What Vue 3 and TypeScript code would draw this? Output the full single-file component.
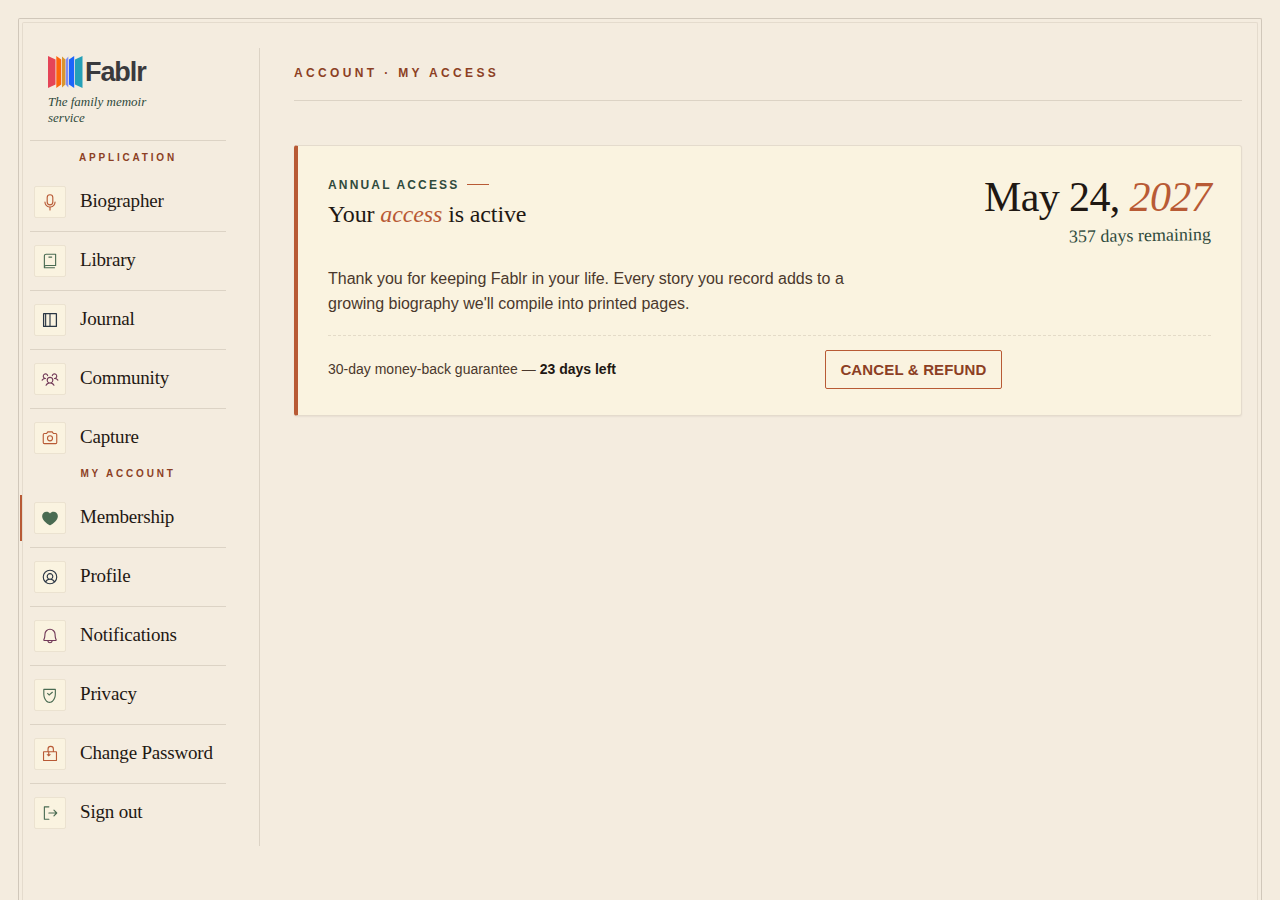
<script setup lang="ts">
interface NavItem {
  label: string
  tone: string
  icon: string
  active?: boolean
}
interface NavGroup {
  title: string
  items: NavItem[]
}

const groups: NavGroup[] = [
  {
    title: 'Application',
    items: [
      { label: 'Biographer', tone: 'rust', icon: 'M128,176a48.05,48.05,0,0,0,48-48V64a48,48,0,0,0-96,0v64A48.05,48.05,0,0,0,128,176ZM96,64a32,32,0,0,1,64,0v64a32,32,0,0,1-64,0Zm40,143.6V240a8,8,0,0,1-16,0V207.6A80.11,80.11,0,0,1,48,128a8,8,0,0,1,16,0,64,64,0,0,0,128,0,8,8,0,0,1,16,0A80.11,80.11,0,0,1,136,207.6Z' },
      { label: 'Library', tone: 'green', icon: 'M208,24H72A32,32,0,0,0,40,56V224a8,8,0,0,0,8,8H192a8,8,0,0,0,0-16H56a16,16,0,0,1,16-16H208a8,8,0,0,0,8-8V32A8,8,0,0,0,208,24Zm-8,160H72a31.82,31.82,0,0,0-16,4.29V56A16,16,0,0,1,72,40H200ZM112,64h40a8,8,0,0,1,0,16h-40a8,8,0,0,1,0-16Z' },
      { label: 'Journal', tone: 'navy', icon: 'M216,28H40A12,12,0,0,0,28,40V216a12,12,0,0,0,12,12H216a12,12,0,0,0,12-12V40A12,12,0,0,0,216,28ZM46,46H58V210H46ZM120,210H74V46h46ZM210,210H136V46h74Z' },
      { label: 'Community', tone: 'plum', icon: 'M244.8,150.4a8,8,0,0,1-11.2-1.6A51.6,51.6,0,0,0,192,128a8,8,0,0,1-7.37-4.89,8,8,0,0,1,0-6.22A8,8,0,0,1,192,112a24,24,0,1,0-23.24-30,8,8,0,1,1-15.5-4A40,40,0,1,1,219,117.51a67.94,67.94,0,0,1,27.43,21.68A8,8,0,0,1,244.8,150.4ZM190.92,212a8,8,0,1,1-13.84,8,57,57,0,0,0-98.16,0,8,8,0,1,1-13.84-8,72.06,72.06,0,0,1,33.74-29.92,48,48,0,1,1,58.36,0A72.06,72.06,0,0,1,190.92,212ZM128,176a32,32,0,1,0-32-32A32,32,0,0,0,128,176ZM72,120a8,8,0,0,0-8-8A24,24,0,1,1,87.24,82a8,8,0,1,0,15.5-4A40,40,0,1,0,37,117.51,67.94,67.94,0,0,0,9.6,139.19a8,8,0,1,0,12.8,9.61A51.6,51.6,0,0,1,64,128,8,8,0,0,0,72,120Z' },
      { label: 'Capture', tone: 'rust', icon: 'M208,56H180.28L166.65,35.56A8,8,0,0,0,160,32H96a8,8,0,0,0-6.65,3.56L75.71,56H48A24,24,0,0,0,24,80V192a24,24,0,0,0,24,24H208a24,24,0,0,0,24-24V80A24,24,0,0,0,208,56Zm8,136a8,8,0,0,1-8,8H48a8,8,0,0,1-8-8V80a8,8,0,0,1,8-8H80a8,8,0,0,0,6.66-3.56L100.28,48h55.43l13.63,20.44A8,8,0,0,0,176,72h32a8,8,0,0,1,8,8ZM128,88a44,44,0,1,0,44,44A44.05,44.05,0,0,0,128,88Zm0,72a28,28,0,1,1,28-28A28,28,0,0,1,128,160Z' },
    ],
  },
  {
    title: 'My account',
    items: [
      { label: 'Membership', tone: 'green', active: true, icon: 'M240,102c0,70-103.79,126.66-108.21,129a8,8,0,0,1-7.58,0C119.79,228.66,16,172,16,102A62.07,62.07,0,0,1,78,40c20.65,0,38.73,8.88,50,23.89C139.27,48.88,157.35,40,178,40A62.07,62.07,0,0,1,240,102Z' },
      { label: 'Profile', tone: 'navy', icon: 'M128,24A104,104,0,1,0,232,128,104.11,104.11,0,0,0,128,24ZM74.08,197.5a64,64,0,0,1,107.84,0,87.83,87.83,0,0,1-107.84,0ZM96,120a32,32,0,1,1,32,32A32,32,0,0,1,96,120Zm97.76,66.41a79.66,79.66,0,0,0-36.06-28.75,48,48,0,1,0-59.4,0,79.66,79.66,0,0,0-36.06,28.75,88,88,0,1,1,131.52,0Z' },
      { label: 'Notifications', tone: 'plum', icon: 'M221.8,175.94C216.25,166.38,208,139.33,208,104a80,80,0,1,0-160,0c0,35.34-8.26,62.38-13.81,71.94A16,16,0,0,0,48,200H88.81a40,40,0,0,0,78.38,0H208a16,16,0,0,0,13.8-24.06ZM128,216a24,24,0,0,1-22.62-16h45.24A24,24,0,0,1,128,216ZM48,184c7.7-13.24,16-43.92,16-80a64,64,0,1,1,128,0c0,36.05,8.28,66.73,16,80Z' },
      { label: 'Privacy', tone: 'green', icon: 'M204,40H40a8,8,0,0,0-8,8v64c0,80,50,128,90,128s90-48,90-128V48A8,8,0,0,0,204,40ZM196,112c0,68-42,112-74,112S48,180,48,112V56H196ZM84,108l12-12,20,20,44-38,11,13-55,47Z' },
      { label: 'Change Password', tone: 'rust', icon: 'M216,88H184V58a46,46,0,0,0-92,0V88H40a12,12,0,0,0-12,12V216a12,12,0,0,0,12,12H216a12,12,0,0,0,12-12V100A12,12,0,0,0,216,88ZM108,58a30,30,0,0,1,60,0V88H108ZM212,212H44V104H102v26H82v8l28,26,28-26v-8H118V104h94Z' },
      { label: 'Sign out', tone: 'green', icon: 'M120,216a8,8,0,0,1-8,8H48a8,8,0,0,1-8-8V40a8,8,0,0,1,8-8h64a8,8,0,0,1,0,16H56V208h56A8,8,0,0,1,120,216Zm109.66-93.66-40-40a8,8,0,0,0-11.32,11.32L204.69,120H112a8,8,0,0,0,0,16h92.69l-26.35,26.34a8,8,0,0,0,11.32,11.32l40-40A8,8,0,0,0,229.66,122.34Z' },
    ],
  },
]
</script>

<template>
  <div class="page">
    <div class="frame">
      <aside class="sidebar">
        <div class="brand">
          <a class="logo" href="#">
            <svg class="mark" viewBox="0 0 35 32" aria-hidden="true">
              <path fill="#e54457" d="M0 0 7.5 3.500V28.500L0 32Z" />
              <path fill="#fe650a" d="M8.300 0 13.200 3.500V28.500L8.300 32Z" />
              <path fill="#d9952f" d="M14 .5 17.400 3.500V28.500L14 31.500Z" />
              <path fill="#7d8cf5" d="M20.300 .5 17.800 3.500V28.500L20.300 31.500Z" />
              <path fill="#1c64fb" d="M26.200 0 21 3.500V28.500L26.200 32Z" />
              <path fill="#24a0b8" d="M34.500 0 27 3.500V28.500L34.500 32Z" />
            </svg>
            <span class="wordmark">Fablr</span>
          </a>
          <p class="tagline">The family memoir service</p>
        </div>
        <nav v-for="group in groups" :key="group.title" class="group" :aria-label="group.title">
          <h2 class="group-title">{{ group.title }}</h2>
          <ul class="items">
            <li v-for="item in group.items" :key="item.label">
              <a class="item" :class="{ active: item.active }" href="#" :aria-current="item.active ? 'page' : undefined">
                <span class="tile" :class="item.tone">
                  <svg viewBox="0 0 256 256" fill="currentColor" fill-rule="evenodd" aria-hidden="true"><path :d="item.icon" /></svg>
                </span>
                <span class="label">{{ item.label }}</span>
              </a>
            </li>
          </ul>
        </nav>
      </aside>

      <main class="main">
        <header class="topbar">
          <h1>Account · My access</h1>
        </header>
        <section class="card">
          <div class="card-head">
            <div>
              <p class="eyebrow">Annual access</p>
              <h2 class="title">Your <em>access</em> is active</h2>
            </div>
            <div class="until">
              <p class="date">May 24, <em>2027</em></p>
              <p class="remaining">357 days remaining</p>
            </div>
          </div>
          <p class="message">Thank you for keeping Fablr in your life. Every story you record adds to a growing biography we'll compile into printed pages.</p>
          <div class="card-foot">
            <p>30-day money-back guarantee — <strong>23 days left</strong></p>
            <button class="cancel" type="button">Cancel &amp; refund</button>
          </div>
        </section>
      </main>
    </div>
  </div>
</template>

<style>
body {
  margin: 0;
  background: #f4ecdf;
}
</style>

<style scoped>
.page {
  box-sizing: border-box;
  min-height: 100vh;
  display: flex;
  padding: 18px 18px 0;
  background: #f4ecdf;
  color: #1f1813;
  font-family: "Liberation Sans", Arial, sans-serif;
}
h1, h2, p, ul {
  margin: 0;
  padding: 0;
}
a {
  color: inherit;
  text-decoration: none;
}
em {
  color: #b85a35;
}
.frame {
  position: relative;
  flex: 1;
  min-width: 0;
  display: flex;
  align-items: flex-start;
  border: 1px solid #d0c7ba;
  border-bottom: 0;
  border-radius: 2px 2px 0 0;
  padding: 29px 19px 24px 11px;
}
.frame::before {
  content: "";
  position: absolute;
  inset: 3px 3px 0;
  border: 1px solid #e4dbcd;
  border-bottom: 0;
  border-radius: 2px 2px 0 0;
  pointer-events: none;
}
.sidebar {
  flex: none;
  width: 196px;
  padding: 0 33px 4px 0;
  border-right: 1px solid #dcd3c5;
}
.brand {
  padding: 6px 18px 14px;
  border-bottom: 1px solid #dcd3c5;
  margin-bottom: 10px;
}
.logo {
  display: flex;
  align-items: center;
  gap: 2px;
  height: 36px;
}
.mark {
  width: 35px;
  height: 32px;
}
.wordmark {
  font-size: 27px;
  font-weight: 700;
  line-height: 32px;
  letter-spacing: -0.04em;
  color: #3a3a3d;
}
.tagline {
  max-width: 120px;
  margin-top: 4px;
  font: italic 13px/16px "Liberation Serif", "Times New Roman", serif;
  color: #2f4a3c;
}
.group-title {
  padding-bottom: 8px;
  font-size: 10px;
  line-height: 14px;
  font-weight: 700;
  letter-spacing: 0.28em;
  text-align: center;
  text-transform: uppercase;
  color: #8c3f24;
}
.items {
  list-style: none;
}
.items li + li {
  border-top: 1px solid #dcd3c5;
}
.item {
  position: relative;
  display: flex;
  align-items: center;
  gap: 14px;
  padding: 13px 4px;
  font: 19px/30px "Liberation Serif", "Times New Roman", serif;
  letter-spacing: -0.01em;
  white-space: nowrap;
}
.label {
  padding-bottom: 2px;
}
.item.active::before {
  content: "";
  position: absolute;
  left: -10px;
  top: 6px;
  bottom: 6px;
  width: 2px;
  background: #b85a35;
}
.tile {
  box-sizing: border-box;
  width: 32px;
  height: 32px;
  display: grid;
  place-items: center;
  border: 1px solid #ebe2d0;
  border-radius: 2px;
  background: #faf3e0;
}
.tile svg {
  width: 18px;
  height: 18px;
}
.rust { color: #b85a35; }
.green { color: #4a6b52; }
.navy { color: #2a3644; }
.plum { color: #723a58; }
.main {
  flex: 1;
  min-width: 0;
  padding-left: 34px;
}
.topbar {
  padding: 16px 0 18px;
  border-bottom: 1px solid #dcd3c5;
}
.topbar h1 {
  font-size: 12px;
  line-height: 18px;
  letter-spacing: 0.28em;
  text-transform: uppercase;
  color: #8c3f24;
}
.card {
  margin-top: 44px;
  padding: 26px 30px;
  border: 1px solid #e4dbcd;
  border-left: 4px solid #b85a35;
  border-radius: 3px;
  background: #faf3e0;
  box-shadow: 0 1px 2px rgba(31, 24, 19, 0.06);
}
.card-head {
  display: flex;
  justify-content: space-between;
  gap: 24px;
}
.eyebrow {
  display: flex;
  align-items: center;
  gap: 8px;
  padding-top: 4px;
  font-size: 12px;
  line-height: 18px;
  font-weight: 700;
  letter-spacing: 0.18em;
  text-transform: uppercase;
  color: #2f4a3c;
}
.eyebrow::after {
  content: "";
  width: 22px;
  height: 1px;
  margin-bottom: 1px;
  background: #b85a35;
}
.title {
  margin-top: 6px;
  font: 24px/28px "Liberation Serif", "Times New Roman", serif;
  letter-spacing: -0.005em;
}
.until {
  text-align: right;
  font-family: "Liberation Serif", "Times New Roman", serif;
}
.date {
  font-size: 42px;
  line-height: 50px;
  letter-spacing: -0.015em;
}
.remaining {
  margin-top: 2px;
  font-size: 18px;
  line-height: 24px;
  color: #2f4a3c;
  transform: rotate(-1deg);
}
.message {
  max-width: 540px;
  margin-top: 18px;
  font-size: 16px;
  line-height: 25px;
  color: #4a382c;
}
.card-foot {
  display: flex;
  align-items: center;
  justify-content: space-between;
  margin-top: 19px;
  padding-top: 14px;
  border-top: 1px dashed #e4dbc8;
  font-size: 14px;
  line-height: 19px;
  color: #4a382c;
}
.card-foot::after {
  content: "";
}
.card-foot strong {
  color: #1f1813;
}
.cancel {
  padding: 9px 14px;
  border: 1px solid #b85a35;
  border-radius: 2px;
  background: transparent;
  font: 700 15px/19px "Liberation Sans", Arial, sans-serif;
  letter-spacing: 0.01em;
  text-transform: uppercase;
  color: #8c3f24;
}
</style>
